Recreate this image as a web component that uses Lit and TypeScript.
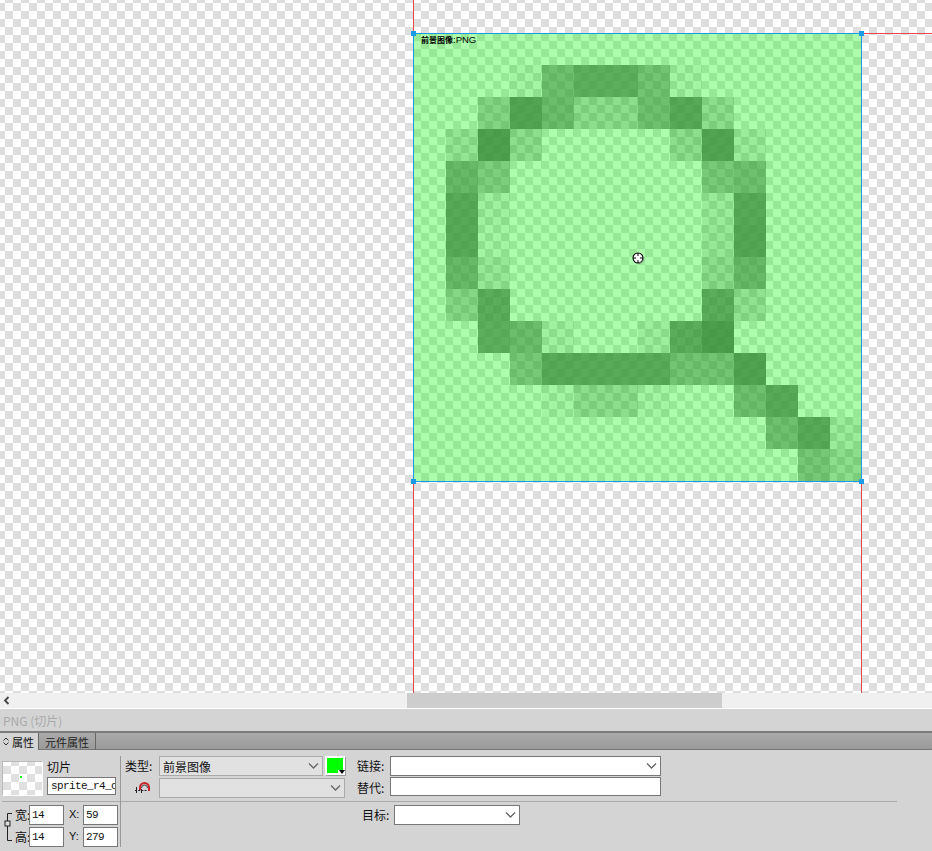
import { LitElement, html, css, svg } from "lit";
import { customElement } from "lit/decorators.js";

const ALPHA: number[][] = [
  [0,0,0,0,0,0,0,0,0,0,0,0,0,0],
  [0,0,0,6,36,46,46,34,6,0,0,0,0,0],
  [0,0,24,52,38,19,19,36,50,19,0,0,0,0],
  [0,15,55,19,0,0,0,0,19,52,11,0,0,0],
  [0,40,28,0,0,0,0,0,0,30,36,0,0,0],
  [0,49,8,0,0,0,0,0,0,11,49,0,0,0],
  [0,49,6,0,0,0,0,0,0,13,51,0,0,0],
  [0,40,13,0,0,0,0,0,0,19,40,0,0,0],
  [0,23,47,0,0,0,0,0,0,47,17,0,0,0],
  [0,0,46,38,8,0,0,10,47,56,0,0,0,0],
  [0,0,0,31,49,48,48,48,34,34,53,0,0,0],
  [0,0,0,0,6,19,19,6,0,0,36,49,0,0],
  [0,0,0,0,0,0,0,0,0,0,0,36,49,11],
  [0,0,0,0,0,0,0,0,0,0,0,0,32,19],
];

const chevron = svg`<svg class="chev" width="11" height="6" viewBox="0 0 11 6"><path d="M1 .5 5.5 5 10 .5" fill="none" stroke="#666" stroke-width="1.3"/></svg>`;

@customElement("app-root")
export class AppRoot extends LitElement {
  static styles = css`
    :host { display: block; width: 932px; height: 851px; overflow: hidden; background: #d4d4d4;
      font-family: "Noto Sans CJK SC", "Liberation Sans", sans-serif; font-size: 12px; color: #111; }
    .stage { position: relative; height: 693px; overflow: hidden; background: repeating-conic-gradient(#dedede 0 25%, #fff 0 50%) -3px -5px / 16px 16px; }
    .guide { position: absolute; background: #e5484d; }
    .gv1 { left: 413px; top: 0; width: 1px; height: 693px; }
    .gv2 { left: 861px; top: 481px; width: 1px; height: 212px; }
    .gh { left: 862px; top: 33px; width: 70px; height: 1px; }
    .canvas { position: absolute; left: 413px; top: 33px; width: 449px; height: 449px; box-sizing: border-box;
      border: 1px solid #1b9be6; overflow: hidden; background: repeating-conic-gradient(#dedede 0 25%, #fff 0 50%) -9px -1px / 16px 16px; }
    .sprite { display: grid; grid-template-columns: repeat(14, 32px); grid-auto-rows: 32px; width: 448px; height: 448px; margin-top: -1px; }
    .px { background: #555; }
    .tint { position: absolute; inset: 0; background: rgba(0, 255, 0, .32); }
    .caption { position: absolute; left: 7px; top: -1px; line-height: 13px; white-space: nowrap; color: #000; font-size: 8px; font-weight: 700; }
    .caption span { font-family: "Liberation Sans", sans-serif; font-size: 9.5px; font-weight: 400; }
    .handle { position: absolute; width: 5px; height: 5px; background: #1b9be6; }
    .cursor { position: absolute; left: 631px; top: 251px; }

    .scroll { position: relative; height: 15px; background: #f0f0f0; border-bottom: 1px solid #fff; }
    .thumb { position: absolute; left: 407px; top: 0; width: 315px; height: 15px; background: #cdcdcd; }
    .scroll svg { position: absolute; left: 3px; top: 3px; }
    .status { height: 22px; line-height: 24px; padding-left: 3px; color: #aaa; font-size: 12px; box-sizing: border-box; }
    .rule { height: 2px; background: #7b7b7b; }
    .tabs { display: flex; height: 17px; background: linear-gradient(#aaa, #9a9a9a); border-bottom: 1px solid #777; box-sizing: border-box; font-size: 11px; }
    .tab { display: flex; align-items: center; height: 17px; box-sizing: border-box; border-right: 1px solid #666; line-height: 16px; }
    .tab.on { width: 39px; background: #d4d4d4; padding-left: 3px; gap: 3px; }
    .tab.off { width: 57px; justify-content: center; color: #222; }

    .panel { position: relative; height: 101px; display: grid; grid-template-columns: 120px 1fr; grid-template-rows: 52px 49px; }
    .panel::before { content: ""; position: absolute; left: 120px; top: 6px; width: 1px; height: 91px; background: #999; }
    .a { display: flex; padding-top: 11px; gap: 4px; margin-left: 2px; box-sizing: border-box; border-bottom: 1px solid #aaa; }
    .preview { width: 41px; height: 35px; box-sizing: border-box; border: 1px solid #fff; border-top-color: #bbb; border-left-color: #bbb; position: relative; overflow: hidden;
      background: repeating-conic-gradient(#e0e0e0 0 25%, #fff 0 50%) 0 -4px / 16px 16px; }
    .dot { position: absolute; left: 17px; top: 14px; width: 2px; height: 2px; background: #0f0; }
    .name { display: flex; flex-direction: column; margin-top: -5px; }
    .name b { font-weight: 400; line-height: 22px; height: 21px; font-size: 12px; }
    .field { box-sizing: border-box; background: #fff; border: 1px solid #777; font-family: "Liberation Mono", monospace; font-size: 11px; letter-spacing: -.6px; overflow: hidden; white-space: nowrap; }
    .field.nm { width: 69px; height: 18px; line-height: 16px; padding-left: 3px; }
    .b { padding: 6px 0 0 5px; border-bottom: 1px solid #aaa; width: 772px; height: 45px; box-sizing: content-box; display: grid;
      grid-template-columns: 34px 164px 2px 20px 12px 33px 271px; grid-template-rows: 20px 20px; row-gap: 2px; }
    .lbl { line-height: 19px; white-space: nowrap; }
    .sel { box-sizing: border-box; display: flex; align-items: center; justify-content: flex-end; padding-right: 3px; border: 1px solid #aaa; background: #e1e1e1; padding-left: 3px; }
    .sel span { flex: 1; line-height: 17px; }
    .sel.w { border-color: #777; background: #fff; }
    .sel.wide { grid-column: 2 / 5; }
    .sel.alt { height: 19px; margin-top: -1px; }
    .swatch { grid-column: 4; box-sizing: border-box; width: 20px; height: 19px; border: 2px solid #fff; box-shadow: 1px 1px 0 #999; background: #0f0; position: relative; }
    .tri { position: absolute; right: -2px; bottom: -2px; width: 7px; height: 5px; background: #fff; display: flex; justify-content: center; }
    .c { padding-top: 3px; display: grid;
      grid-template-columns: 15px 14px 35px 19px 35px; grid-template-rows: 20px 20px; row-gap: 2px; }
    .link { grid-row: 1 / 3; width: 15px; }
    .field.n { height: 20px; line-height: 18px; padding-left: 2px; }
    .xy { padding-left: 5px; line-height: 18px; font-family: "Liberation Sans", sans-serif; font-size: 11px; }
    .d { padding: 3px 0 0 242px; display: flex; }
    .d .lbl { width: 32px; }
    .d .sel { width: 126px; height: 20px; }
    .i1 { justify-self: center; align-self: center; }
  `;

  render() {
    const corners: [number, number][] = [[411, 31], [859, 31], [411, 479], [859, 479]];
    return html`
      <div class="stage">
        <div class="guide gv1"></div>
        <div class="guide gv2"></div>
        <div class="guide gh"></div>
        <div class="canvas">
          <div class="sprite">
            ${ALPHA.flat().map((a) => html`<div class="px" style="opacity:${(a * 1.5) / 100}"></div>`)}
          </div>
          <div class="tint"></div>
          <div class="caption">前景图像<span>:PNG</span></div>
        </div>
        ${corners.map(([x, y]) => html`<div class="handle" style="left:${x}px;top:${y}px"></div>`)}
        <svg class="cursor" width="14" height="14" viewBox="0 0 14 14">
          <circle cx="7" cy="7" r="5" fill="#fff" stroke="#000" stroke-width="1.1"/>
          <path d="M7 2v3M7 9v3M2 7h3M9 7h3" stroke="#000" stroke-width="1"/>
          <path d="M8 12.5l3-1.5 1.5-2.5" fill="none" stroke="#777" stroke-width="1"/>
        </svg>
      </div>
      <div class="scroll">
        <svg width="8" height="9" viewBox="0 0 8 9"><path d="M5.5 1 2 4.5 5.5 8" fill="none" stroke="#444" stroke-width="1.8"/></svg>
        <div class="thumb"></div>
      </div>
      <div class="status">PNG (切片)</div>
      <div class="rule"></div>
      <div class="tabs">
        <div class="tab on">
          <svg width="6" height="9" viewBox="0 0 6 9"><path d="M.5 3.5 3 1l2.5 2.5M.5 5.5 3 8l2.5-2.5" fill="none" stroke="#333"/></svg>
          属性
        </div>
        <div class="tab off">元件属性</div>
      </div>
      <div class="panel">
        <div class="a">
          <div class="preview"><div class="dot"></div></div>
          <div class="name">
            <b>切片</b>
            <div class="field nm">sprite_r4_c</div>
          </div>
        </div>
        <div class="b">
          <div class="lbl">类型:</div>
          <div class="sel"><span>前景图像</span>${chevron}</div>
          <div></div>
          <div class="swatch"><div class="tri"><svg width="6" height="4" viewBox="0 0 6 4"><path d="M0 0h6L3 4z" fill="#000"/></svg></div></div>
          <div></div>
          <div class="lbl">链接:</div>
          <div class="sel w">${chevron}</div>
          <svg class="i1" width="17" height="12" viewBox="0 0 17 12">
            <path d="M6 8V5.5a4.5 4.5 0 0 1 9 0V9" fill="none" stroke="#c8232c" stroke-width="2"/>
            <path d="M7.5 6a3 3 0 0 1 6 0" fill="none" stroke="#222" stroke-width=".8"/>
            <path d="M1 8.5h12" stroke="#222" stroke-dasharray="2 1.2"/>
            <path d="M2.5 5v6M7.5 7v4" stroke="#222"/>
          </svg>
          <div class="sel wide">${chevron}</div>
          <div></div>
          <div class="lbl">替代:</div>
          <div class="sel w alt"></div>
        </div>
        <div class="c">
          <svg class="link" width="15" height="40" viewBox="0 0 15 40">
            <path d="M12 8.5H7.5V16M7.5 21V35.5H12" fill="none" stroke="#222"/>
            <rect x="5" y="16" width="5" height="5" fill="#ddd" stroke="#222"/>
          </svg>
          <div class="lbl">宽:</div>
          <div class="field n">14</div>
          <div class="xy">X:</div>
          <div class="field n">59</div>
          <div class="lbl">高:</div>
          <div class="field n">14</div>
          <div class="xy">Y:</div>
          <div class="field n">279</div>
        </div>
        <div class="d">
          <div class="lbl">目标:</div>
          <div class="sel w">${chevron}</div>
        </div>
      </div>
    `;
  }
}
